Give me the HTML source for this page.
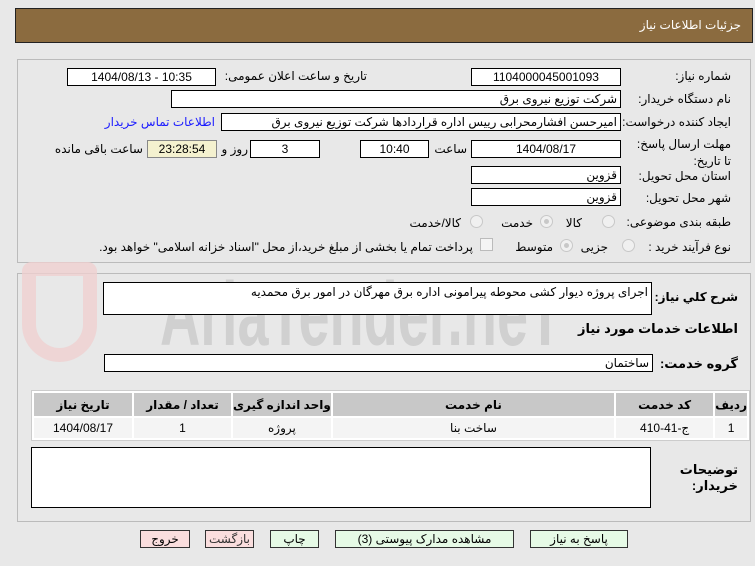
<!DOCTYPE html>
<html><head><meta charset="utf-8"><style>
*{box-sizing:border-box;margin:0;padding:0}
body{width:755px;height:566px;background:#e8e8e8;font-family:"Liberation Sans","DejaVu Sans",sans-serif;font-size:12px;color:#000;position:relative;overflow:hidden}
.a{position:absolute}
.box{position:absolute;background:#fff;border:1px solid #000;height:18px;line-height:16px;font-size:12px;text-align:center;white-space:nowrap;overflow:hidden}
.r{text-align:right;padding-right:3px;direction:rtl}
.lb{position:absolute;direction:rtl;white-space:nowrap;font-size:12px}
.b{font-weight:bold}
.rad{position:absolute;width:13px;height:13px;border-radius:50%;border:1px solid #c8c8c8;background:#f0f0f0}
.rad.on::after{content:"";position:absolute;left:3px;top:3px;width:5px;height:5px;border-radius:50%;background:#c8c8c8}
.btn{position:absolute;top:530px;height:18px;border:1px solid #333;line-height:16px;text-align:center;font-size:12px}
table{border-collapse:separate;border-spacing:2px}
td{white-space:nowrap}
</style></head><body>
<div class="a" style="left:15px;top:8px;width:738px;height:35px;background:#8b6b3f;border:1px solid #222"></div>
<div class="lb" style="right:14px;top:18px;color:#fff;font-size:12px">جزئیات اطلاعات نیاز</div>

<div class="a" style="left:17px;top:59px;width:734px;height:204px;border:1px solid #bbb"></div>
<div class="a" style="left:17px;top:273px;width:734px;height:249px;border:1px solid #bbb"></div>

<div class="a" style="left:160px;top:270px;font-size:90px;line-height:90px;font-weight:bold;color:#d0d0d0;font-family:'Liberation Sans',sans-serif;transform:scaleX(0.62);transform-origin:left">AriaTender.neT</div>
<div class="a" style="left:22px;top:262px;width:75px;height:100px;border:14px solid #efcfcf;border-radius:10px 10px 40px 40px;opacity:.8"></div>

<div class="lb" style="right:24px;top:69px">شماره نیاز:</div>
<div class="box" style="left:471px;top:68px;width:150px">1104000045001093</div>
<div class="lb" style="right:388px;top:69px">تاریخ و ساعت اعلان عمومی:</div>
<div class="box" style="left:67px;top:68px;width:149px">1404/08/13 - 10:35</div>

<div class="lb" style="right:24px;top:92px">نام دستگاه خریدار:</div>
<div class="box r" style="left:171px;top:90px;width:450px">شرکت توزیع نیروی برق</div>

<div class="lb" style="right:24px;top:115px">ایجاد کننده درخواست:</div>
<div class="box r" style="left:221px;top:113px;width:400px">امیرحسن افشارمحرابی رییس اداره قراردادها شرکت توزیع نیروی برق</div>
<div class="lb" style="right:540px;top:115px;color:#1a1aff">اطلاعات تماس خریدار</div>

<div class="lb" style="right:24px;top:136px;line-height:17px;width:100px;white-space:normal">مهلت ارسال پاسخ: تا تاریخ:</div>
<div class="box" style="left:471px;top:140px;width:150px">1404/08/17</div>
<div class="lb" style="right:288px;top:142px">ساعت</div>
<div class="box" style="left:360px;top:140px;width:69px">10:40</div>
<div class="box" style="left:250px;top:140px;width:70px">3</div>
<div class="lb" style="right:507px;top:142px">روز و</div>
<div class="box" style="left:147px;top:140px;width:70px;background:#f4f1cf;border-color:#888">23:28:54</div>
<div class="lb" style="right:612px;top:142px">ساعت باقی مانده</div>

<div class="lb" style="right:24px;top:169px">استان محل تحویل:</div>
<div class="box r" style="left:471px;top:166px;width:150px">قزوین</div>
<div class="lb" style="right:24px;top:191px">شهر محل تحویل:</div>
<div class="box r" style="left:471px;top:188px;width:150px">قزوین</div>

<div class="lb" style="right:24px;top:215px">طبقه بندی موضوعی:</div>
<div class="rad" style="left:602px;top:215px"></div>
<div class="lb" style="right:173px;top:216px">کالا</div>
<div class="rad on" style="left:540px;top:215px"></div>
<div class="lb" style="right:222px;top:216px">خدمت</div>
<div class="rad" style="left:470px;top:215px"></div>
<div class="lb" style="right:294px;top:216px">کالا/خدمت</div>

<div class="lb" style="right:24px;top:240px">نوع فرآیند خرید :</div>
<div class="rad" style="left:622px;top:239px"></div>
<div class="lb" style="right:147px;top:240px">جزیی</div>
<div class="rad on" style="left:560px;top:239px"></div>
<div class="lb" style="right:202px;top:240px">متوسط</div>
<div class="a" style="left:480px;top:238px;width:13px;height:13px;border:1px solid #bbb;background:#f4f4f4"></div>
<div class="lb" style="right:282px;top:240px">پرداخت تمام یا بخشی از مبلغ خرید،از محل "اسناد خزانه اسلامی" خواهد بود.</div>

<div class="lb b" style="right:17px;top:290px;font-size:12px">شرح کلي نیاز:</div>
<div class="a" style="left:103px;top:282px;width:549px;height:33px;background:#fff;border:1px solid #000;direction:rtl;padding:2px 3px;font-size:12px">اجرای پروژه دیوار کشی محوطه پیرامونی اداره برق مهرگان در امور برق محمدیه</div>
<div class="lb b" style="right:17px;top:321px;font-size:13px">اطلاعات خدمات مورد نیاز</div>
<div class="lb b" style="right:17px;top:356px;font-size:13px">گروه خدمت:</div>
<div class="box r" style="left:104px;top:354px;width:549px">ساختمان</div>

<div class="a" style="left:31px;top:390px;width:719px;height:51px;border:1px solid #ccc;background:#fff">
<table style="width:100%;direction:rtl;font-size:12px;text-align:center">
<tr style="background:#c8c8c8;font-weight:bold;height:23px"><td style="width:28px">ردیف</td><td style="width:97px">کد خدمت</td><td>نام خدمت</td><td style="width:96px">واحد اندازه گیری</td><td style="width:97px">تعداد / مقدار</td><td style="width:98px">تاریخ نیاز</td></tr>
<tr style="background:#f4f4f4;height:20px"><td>1</td><td>ج-41-410</td><td>ساخت بنا</td><td>پروژه</td><td>1</td><td>1404/08/17</td></tr>
</table></div>

<div class="lb b" style="right:17px;top:462px;font-size:13px;line-height:16px;text-align:right">توضیحات<br>خریدار:</div>
<div class="a" style="left:31px;top:447px;width:620px;height:61px;background:#fff;border:1px solid #000"></div>

<div class="btn" style="left:140px;width:50px;background:#fadede">خروج</div>
<div class="btn" style="left:205px;width:49px;background:#fadede;color:#333">بازگشت</div>
<div class="btn" style="left:270px;width:49px;background:#e6fae6">چاپ</div>
<div class="btn" style="left:335px;width:179px;background:#e6fae6">مشاهده مدارک پیوستی (3)</div>
<div class="btn" style="left:530px;width:98px;background:#e6fae6">پاسخ به نیاز</div>
</body></html>
